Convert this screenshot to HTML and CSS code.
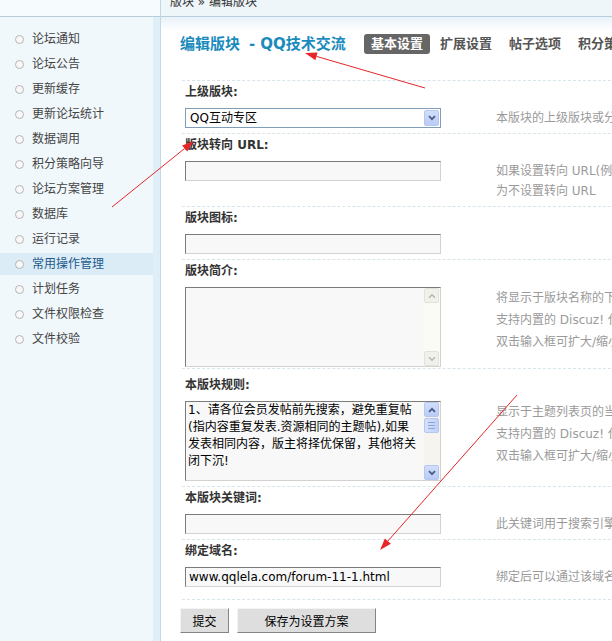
FILE: index.html
```html
<!DOCTYPE html>
<html lang="zh-CN">
<head>
    <meta charset="UTF-8">
    <meta name="viewport" content="width=device-width, initial-scale=1.0">
    <title>编辑版块</title>
    <link rel="stylesheet" href="styles.css">
</head>
<body>

<div class="page">

    <div class="sidebar">
        <div class="topbar"></div>
        <ul class="menu">
            <li>论坛通知</li>
            <li>论坛公告</li>
            <li>更新缓存</li>
            <li>更新论坛统计</li>
            <li>数据调用</li>
            <li>积分策略向导</li>
            <li>论坛方案管理</li>
            <li>数据库</li>
            <li>运行记录</li>
            <li class="active">常用操作管理</li>
            <li>计划任务</li>
            <li>文件权限检查</li>
            <li>文件校验</li>
        </ul>
    </div>

    <div class="main">
        <div class="topbar"><div class="crumb">版块 &raquo; 编辑版块</div></div>

        <div class="content">
            <div class="heading">
                <h3 class="title">编辑版块<span class="dash">-</span>QQ技术交流</h3>
                <ul class="tabs">
                    <li class="current">基本设置</li>
                    <li>扩展设置</li>
                    <li>帖子选项</li>
                    <li>积分策略</li>
                </ul>
            </div>

            <div class="form">
                <div class="setting">
                    <div class="label">上级版块:</div>
                    <div class="field">
                        <div class="control">
                            <div class="select">
                                <span class="select-text">QQ互动专区</span>
                                <span class="drop">
                                    <svg width="8" height="6" viewBox="0 0 8 6"><path d="M1 1.2 L4 4.2 L7 1.2" fill="none" stroke="#4b5f86" stroke-width="1.8"/></svg>
                                </span>
                            </div>
                        </div>
                        <div class="hint">本版块的上级版块或分类</div>
                    </div>
                </div>

                <div class="setting">
                    <div class="label">版块转向 URL:</div>
                    <div class="field">
                        <div class="control"><input class="input" type="text" value=""></div>
                        <div class="hint">如果设置转向 URL(例如 http://www.comsenz.com)<br>为不设置转向 URL</div>
                    </div>
                </div>

                <div class="setting">
                    <div class="label">版块图标:</div>
                    <div class="field">
                        <div class="control"><input class="input" type="text" value=""></div>
                        <div class="hint"></div>
                    </div>
                </div>

                <div class="setting area-row">
                    <div class="label">版块简介:</div>
                    <div class="field">
                        <div class="control">
                            <div class="area">
                                <div class="area-text"></div>
                                <div class="scroll disabled">
                                    <span class="sbtn"><svg width="8" height="6" viewBox="0 0 8 6"><path d="M1 4.8 L4 1.8 L7 4.8" fill="none" stroke="#b9b9b0" stroke-width="1.6"/></svg></span>
                                    <span class="track"></span>
                                    <span class="sbtn"><svg width="8" height="6" viewBox="0 0 8 6"><path d="M1 1.2 L4 4.2 L7 1.2" fill="none" stroke="#b9b9b0" stroke-width="1.6"/></svg></span>
                                </div>
                            </div>
                        </div>
                        <div class="hint tall">将显示于版块名称的下面，提供对本版块的简短描述<br>支持内置的 Discuz! 代码<br>双击输入框可扩大/缩小</div>
                    </div>
                </div>

                <div class="setting spaced">
                    <div class="label">本版块规则:</div>
                    <div class="field">
                        <div class="control">
                            <div class="area">
                                <div class="area-text">1、请各位会员发帖前先搜索，避免重复帖<br>(指内容重复发表.资源相同的主题帖),如果<br>发表相同内容，版主将择优保留，其他将关<br>闭下沉!</div>
                                <div class="scroll">
                                    <span class="sbtn"><svg width="8" height="6" viewBox="0 0 8 6"><path d="M1 4.8 L4 1.8 L7 4.8" fill="none" stroke="#4b5f86" stroke-width="1.8"/></svg></span>
                                    <span class="thumb"><i></i><i></i><i></i></span>
                                    <span class="track"></span>
                                    <span class="sbtn"><svg width="8" height="6" viewBox="0 0 8 6"><path d="M1 1.2 L4 4.2 L7 1.2" fill="none" stroke="#4b5f86" stroke-width="1.8"/></svg></span>
                                </div>
                            </div>
                        </div>
                        <div class="hint tall">显示于主题列表页的当前版块规则，留空为不显示<br>支持内置的 Discuz! 代码<br>双击输入框可扩大/缩小</div>
                    </div>
                </div>

                <div class="setting">
                    <div class="label">本版块关键词:</div>
                    <div class="field">
                        <div class="control"><input class="input" type="text" value=""></div>
                        <div class="hint">此关键词用于搜索引擎优化，放在 meta 的 keyword 标签中</div>
                    </div>
                </div>

                <div class="setting last">
                    <div class="label">绑定域名:</div>
                    <div class="field">
                        <div class="control"><input class="input" type="text" value="www.qqlela.com/forum-11-1.html"></div>
                        <div class="hint">绑定后可以通过该域名访问本版块</div>
                    </div>
                </div>
            </div>

            <div class="buttons">
                <button class="btn-submit">提交</button>
                <button class="btn-save">保存为设置方案</button>
            </div>
        </div>
    </div>

</div>

<!-- red annotation arrows drawn on the screenshot -->
<svg class="marks" width="612" height="641" viewBox="0 0 612 641">
    <g stroke="#e5262a" stroke-width="1" fill="#e5262a">
        <line x1="425" y1="88" x2="316.5" y2="56.4"/>
        <polygon points="305,53 317.6,52.5 315.4,60.2" stroke="none"/>
        <line x1="112" y1="207" x2="184.6" y2="148.5"/>
        <polygon points="194,141 187.2,151.6 182.1,145.4" stroke="none"/>
        <line x1="517" y1="395" x2="387.9" y2="541"/>
        <polygon points="380,550 390.9,543.7 384.9,538.4" stroke="none"/>
    </g>
</svg>

</body>
</html>
```

FILE: styles.css
```css
* {
  box-sizing: border-box;
}

html, body {
  margin: 0;
  padding: 0;
}

body {
  font: 12px/1.5 "DejaVu Sans", "Noto Sans CJK SC", sans-serif;
  color: #333;
  background: #fff;
}

.page {
  display: flex;
  width: 612px;
  height: 641px;
  overflow: hidden;
}

/* left menu */
.sidebar {
  flex: none;
  width: 161px;
  border-right: 1px solid #c3d8e5;
  background: linear-gradient(to right, #f1f8fc 153px, #e0eef8 153px);
}

.topbar {
  height: 17px;
  border-bottom: 1px solid #b7cdd9;
  background: #f6fbfd;
  overflow: hidden;
}

.menu {
  list-style: none;
  margin: 0;
  padding: 11px 0 0;
}

.menu li {
  display: flex;
  align-items: center;
  width: 153px;
  height: 22px;
  margin-bottom: 3px;
  color: #444;
  white-space: nowrap;
}

.menu li:before {
  content: "";
  flex: none;
  width: 7px;
  height: 7px;
  margin: 0 8px 0 15px;
  border: 1px solid #b4b4b4;
  border-radius: 50%;
  background: #f8f8f8;
}

.menu li.active {
  background: #dcecf7;
  color: #1d5b8b;
}

/* main area */
.main {
  flex: 1;
  min-width: 0;
  overflow: hidden;
}

.main .topbar {
  background: #eef6fa;
}

.crumb {
  margin: -4px 0 0 9px;
  line-height: 12px;
  color: #333;
  white-space: nowrap;
}

.content {
  height: calc(100% - 17px);
  padding: 17px 0 0 19px;
  background: linear-gradient(#e8f2f9, #fff 14px);
}

.heading {
  display: flex;
  align-items: center;
  height: 20px;
  white-space: nowrap;
}

.title {
  flex: none;
  width: 184px;
  margin: 0;
  font-size: 15px;
  line-height: 20px;
  font-weight: bold;
  color: #1b8bbd;
}

.title .dash {
  margin: 0 5px 0 9px;
}

.tabs {
  display: flex;
  gap: 3px;
  list-style: none;
  margin: 0;
  padding: 0;
}

.tabs li {
  height: 20px;
  padding: 0 7px;
  line-height: 20px;
  font-size: 13px;
  font-weight: bold;
  color: #555;
  border-radius: 3px;
}

.tabs li.current {
  background: #666;
  color: #fff;
}

/* settings table */
.form {
  width: 820px;
  margin: 26px 0 0 2px;
}

.setting {
  border-top: 1px dashed #d8e4eb;
}

.setting.last {
  border-bottom: 1px dashed #d8e4eb;
}

.label {
  height: 27px;
  padding: 4px 0 0 3px;
  line-height: 14px;
  font-weight: bold;
  color: #333;
}

.spaced .label {
  height: 32px;
  padding-top: 9px;
}

.field {
  display: flex;
  padding: 0 0 5px 3px;
}

.area-row .field {
  padding-bottom: 1px;
}

.last .field {
  padding-bottom: 12px;
}

.control {
  flex: none;
  width: 311px;
}

.hint {
  color: #9a9a9a;
  line-height: 20px;
  white-space: nowrap;
}

.hint.tall {
  line-height: 22px;
}

.input {
  display: block;
  width: 256px;
  height: 20px;
  margin: 0;
  padding: 0 3px;
  border: 1px solid;
  border-color: #7b7b7b #d2d2d2 #d2d2d2 #7b7b7b;
  background: #f8f8f8;
  font: 12px/18px "DejaVu Sans", "Noto Sans CJK SC", sans-serif;
  color: #000;
  outline: 0;
}

.select {
  display: flex;
  width: 256px;
  height: 20px;
  border: 1px solid #7f9db9;
  background: #fff;
}

.select-text {
  flex: 1;
  padding-left: 4px;
  line-height: 18px;
  color: #000;
}

.drop {
  display: flex;
  align-items: center;
  justify-content: center;
  width: 15px;
  margin: 1px;
  border: 1px solid #b5c7ef;
  border-radius: 2px;
  background: linear-gradient(#d2defd, #b9cbf6);
}

.area {
  display: flex;
  width: 256px;
  height: 80px;
  border: 1px solid;
  border-color: #7b7b7b #d2d2d2 #d2d2d2 #7b7b7b;
  background: #f8f8f8;
}

.area-text {
  flex: 1;
  padding: 0 2px;
  line-height: 17px;
  color: #000;
  white-space: nowrap;
  overflow: hidden;
}

.scroll {
  display: flex;
  flex-direction: column;
  flex: none;
  width: 16px;
  background: #f5f4ee;
}

.scroll .sbtn {
  display: flex;
  align-items: center;
  justify-content: center;
  height: 15px;
  margin: 0 1px 0 0;
  border: 1px solid #b5c7ef;
  border-radius: 2px;
  background: linear-gradient(#d2defd, #bacbf6);
}

.scroll.disabled {
  background: #fbfbf6;
}

.scroll.disabled .sbtn {
  border-color: #e2e2da;
  background: #f1f1ec;
}

.scroll .track {
  flex: 1;
}

.scroll .thumb {
  display: flex;
  flex-direction: column;
  align-items: center;
  justify-content: center;
  gap: 2px;
  height: 15px;
  margin: 1px 1px 0 0;
  border: 1px solid #b5c7ef;
  border-radius: 2px;
  background: linear-gradient(to right, #d4e0fd, #c1d1f8);
}

.scroll .thumb i {
  display: block;
  width: 7px;
  height: 1px;
  background: #8ea4d8;
}

/* bottom buttons */
.buttons {
  display: flex;
  gap: 8px;
  margin-top: 8px;
}

.buttons button {
  height: 25px;
  padding: 0;
  border: 1px solid;
  border-color: #f4f4f4 #848484 #848484 #f4f4f4;
  background: #dedede;
  font: 12px "DejaVu Sans", "Noto Sans CJK SC", sans-serif;
  color: #000;
}

.btn-submit {
  width: 49px;
}

.btn-save {
  width: 139px;
}

.marks {
  position: absolute;
  left: 0;
  top: 0;
  pointer-events: none;
}
```
